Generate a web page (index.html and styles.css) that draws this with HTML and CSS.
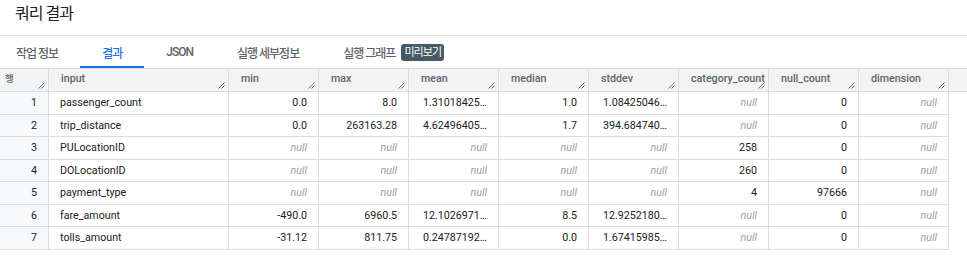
FILE: index.html
```html
<!DOCTYPE html>
<html lang="ko">
<head>
    <meta charset="UTF-8">
    <title>쿼리 결과</title>
    <link rel="stylesheet" href="styles.css">
</head>
<body>
<div class="title">쿼리 결과</div>
<div class="tabs">
    <div class="tab first">작업 정보</div>
    <div class="tab active">결과</div>
    <div class="tab">JSON</div>
    <div class="tab">실행 세부정보</div>
    <div class="tab">실행 그래프 <span class="badge">미리보기</span></div>
</div>
<div class="grid">
    <div class="hd num-col">행<svg class="grip" viewBox="0 0 7 7"><path d="M0.5 6.5L6.5 0.5M3.5 6.5L6.5 3.5"/></svg></div>
    <div class="hd">input<svg class="grip" viewBox="0 0 7 7"><path d="M0.5 6.5L6.5 0.5M3.5 6.5L6.5 3.5"/></svg></div>
    <div class="hd">min<svg class="grip" viewBox="0 0 7 7"><path d="M0.5 6.5L6.5 0.5M3.5 6.5L6.5 3.5"/></svg></div>
    <div class="hd">max<svg class="grip" viewBox="0 0 7 7"><path d="M0.5 6.5L6.5 0.5M3.5 6.5L6.5 3.5"/></svg></div>
    <div class="hd">mean<svg class="grip" viewBox="0 0 7 7"><path d="M0.5 6.5L6.5 0.5M3.5 6.5L6.5 3.5"/></svg></div>
    <div class="hd">median<svg class="grip" viewBox="0 0 7 7"><path d="M0.5 6.5L6.5 0.5M3.5 6.5L6.5 3.5"/></svg></div>
    <div class="hd">stddev<svg class="grip" viewBox="0 0 7 7"><path d="M0.5 6.5L6.5 0.5M3.5 6.5L6.5 3.5"/></svg></div>
    <div class="hd">category_count<svg class="grip" viewBox="0 0 7 7"><path d="M0.5 6.5L6.5 0.5M3.5 6.5L6.5 3.5"/></svg></div>
    <div class="hd">null_count<svg class="grip" viewBox="0 0 7 7"><path d="M0.5 6.5L6.5 0.5M3.5 6.5L6.5 3.5"/></svg></div>
    <div class="hd">dimension<svg class="grip" viewBox="0 0 7 7"><path d="M0.5 6.5L6.5 0.5M3.5 6.5L6.5 3.5"/></svg></div>
    <div class="hd filler"></div>

    <div class="cell num-col">1</div>
    <div class="cell text">passenger_count</div>
    <div class="cell">0.0</div>
    <div class="cell">8.0</div>
    <div class="cell">1.31018425…</div>
    <div class="cell">1.0</div>
    <div class="cell">1.08425046…</div>
    <div class="cell null">null</div>
    <div class="cell">0</div>
    <div class="cell null">null</div>
    <div class="cell filler"></div>

    <div class="cell num-col">2</div>
    <div class="cell text">trip_distance</div>
    <div class="cell">0.0</div>
    <div class="cell">263163.28</div>
    <div class="cell">4.62496405…</div>
    <div class="cell">1.7</div>
    <div class="cell">394.684740…</div>
    <div class="cell null">null</div>
    <div class="cell">0</div>
    <div class="cell null">null</div>
    <div class="cell filler"></div>

    <div class="cell num-col">3</div>
    <div class="cell text">PULocationID</div>
    <div class="cell null">null</div>
    <div class="cell null">null</div>
    <div class="cell null">null</div>
    <div class="cell null">null</div>
    <div class="cell null">null</div>
    <div class="cell">258</div>
    <div class="cell">0</div>
    <div class="cell null">null</div>
    <div class="cell filler"></div>

    <div class="cell num-col">4</div>
    <div class="cell text">DOLocationID</div>
    <div class="cell null">null</div>
    <div class="cell null">null</div>
    <div class="cell null">null</div>
    <div class="cell null">null</div>
    <div class="cell null">null</div>
    <div class="cell">260</div>
    <div class="cell">0</div>
    <div class="cell null">null</div>
    <div class="cell filler"></div>

    <div class="cell num-col">5</div>
    <div class="cell text">payment_type</div>
    <div class="cell null">null</div>
    <div class="cell null">null</div>
    <div class="cell null">null</div>
    <div class="cell null">null</div>
    <div class="cell null">null</div>
    <div class="cell">4</div>
    <div class="cell">97666</div>
    <div class="cell null">null</div>
    <div class="cell filler"></div>

    <div class="cell num-col">6</div>
    <div class="cell text">fare_amount</div>
    <div class="cell">-490.0</div>
    <div class="cell">6960.5</div>
    <div class="cell">12.1026971…</div>
    <div class="cell">8.5</div>
    <div class="cell">12.9252180…</div>
    <div class="cell null">null</div>
    <div class="cell">0</div>
    <div class="cell null">null</div>
    <div class="cell filler"></div>

    <div class="cell num-col">7</div>
    <div class="cell text">tolls_amount</div>
    <div class="cell">-31.12</div>
    <div class="cell">811.75</div>
    <div class="cell">0.24787192…</div>
    <div class="cell">0.0</div>
    <div class="cell">1.67415985…</div>
    <div class="cell null">null</div>
    <div class="cell">0</div>
    <div class="cell null">null</div>
    <div class="cell filler"></div>
</div>
</body>
</html>
```

FILE: styles.css
```css
body {
    margin: 0;
    background: #fff;
    color: #202124;
    font-family: Roboto, "Noto Sans CJK KR", sans-serif;
}

.title {
    height: 35px;
    line-height: 28px;
    padding-left: 15px;
    font-size: 16px;
    letter-spacing: -1px;
    border-bottom: 1px solid #dadce0;
    box-sizing: content-box;
}

.tabs {
    display: flex;
    height: 32px;
}

.tab {
    display: flex;
    align-items: center;
    padding: 2px 22px 0;
    height: 32px;
    box-sizing: border-box;
    border-bottom: 2px solid transparent;
    font-size: 12px;
    font-weight: 500;
    color: #5f6368;
    letter-spacing: -1px;
}

.tab.first {
    padding-left: 16px;
}

.tab.active {
    color: #1a73e8;
    border-bottom-color: #1a73e8;
}

.badge {
    margin-left: 6px;
    padding: 0 3px;
    height: 17px;
    line-height: 17px;
    border-radius: 3px;
    background: #455a64;
    color: #fff;
    font-size: 11px;
    font-weight: 400;
    letter-spacing: -0.9px;
}

.grid {
    display: grid;
    grid-template-columns: 48px 180px repeat(8, 90px) 19px;
    grid-template-rows: 23px;
    grid-auto-rows: 22.57px;
    border-top: 1px solid #dadce0;
    font-size: 10.7px;
}

.hd {
    position: relative;
    padding: 0 4px 0 12px;
    line-height: 20px;
    background: #f1f3f4;
    color: #5f6368;
    font-weight: 500;
    border-left: 1px solid #dadce0;
    border-bottom: 1px solid #dadce0;
    white-space: nowrap;
    overflow: hidden;
}

.hd.num-col {
    border-left: none;
    padding: 0 5px;
    font-size: 9.5px;
}

.grip {
    position: absolute;
    right: 3px;
    bottom: 2px;
    width: 7px;
    height: 7px;
    fill: none;
    stroke: #5f6368;
    stroke-width: 0.9;
}

.cell {
    padding: 0 11px;
    line-height: 21.5px;
    text-align: right;
    border-left: 1px solid #dadce0;
    border-bottom: 1px solid #dadce0;
    white-space: nowrap;
    overflow: hidden;
    text-overflow: ellipsis;
}

.cell.num-col {
    border-left: none;
    background: #f8f9fa;
}

.cell.text {
    text-align: left;
}

.cell.null {
    color: #9aa0a6;
    font-style: italic;
}

.cell.filler {
    border-bottom: none;
    background: #fff;
}
```
